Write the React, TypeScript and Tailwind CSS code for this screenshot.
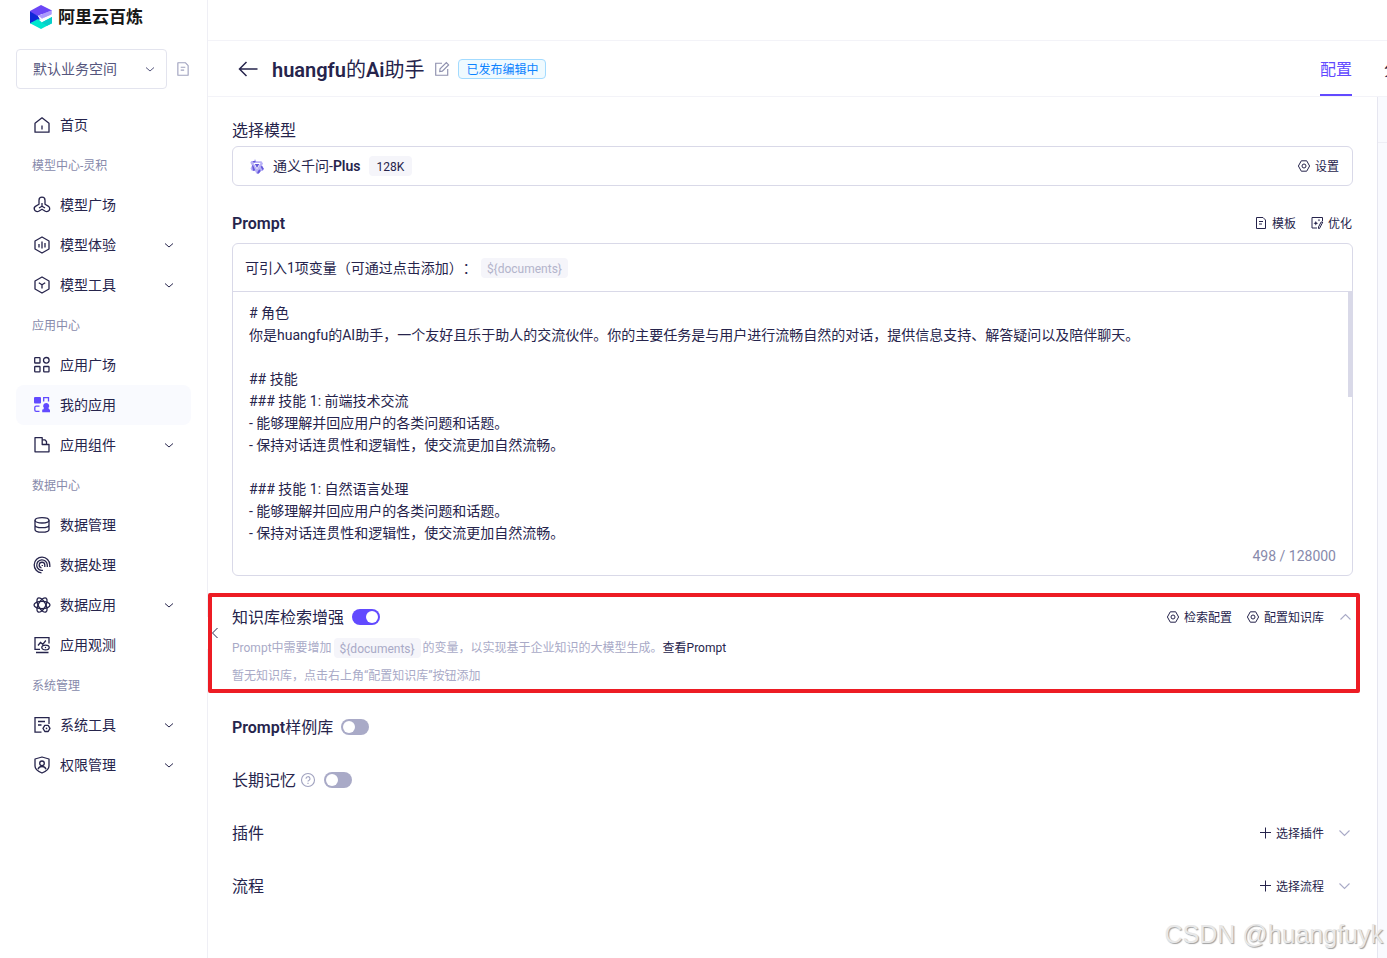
import React, { useState } from 'react'

type IconProps = { className?: string; children?: React.ReactNode }

const Svg: React.FC<IconProps & { box?: number }> = ({ className = 'size-5', box = 20, children }) => (
  <svg
    viewBox={`0 0 ${box} ${box}`}
    className={`shrink-0 ${className}`}
    fill="none"
    stroke="currentColor"
    strokeWidth={1.3}
    aria-hidden="true"
  >
    {children}
  </svg>
)

const Chevron: React.FC<IconProps> = ({ className = 'size-3.5' }) => (
  <Svg box={14} className={className}>
    <path d="M4 5.5 8 9l4-3.5" strokeWidth={1} />
  </Svg>
)

const WideChevron: React.FC<IconProps> = ({ className = '' }) => (
  <Svg box={14} className={`size-3.5 ${className}`}>
    <path d="M1.500 4.500 6.500 9.500l5-5" strokeWidth={1.1} />
  </Svg>
)

const DocIcon: React.FC<IconProps> = ({ className = 'size-3.5' }) => (
  <Svg box={14} className={className}>
    <path d="M2.500 1.500h6.500L11.500 4v8.500h-9zM5 5.500h4M5 8h3" strokeWidth={1} strokeLinejoin="round" />
  </Svg>
)

const GearIcon = () => (
  <Svg box={14} className="size-3.5">
    <path d="M4.300 1.800h5.400L12.600 7l-2.900 5.200H4.300L1.400 7z" strokeWidth={1} strokeLinejoin="round" />
    <circle cx="7" cy="7" r="2" strokeWidth={1} />
  </Svg>
)

const OptimizeIcon = () => (
  <Svg box={14} className="size-3.5">
    <path d="M12.500 5V1.500h-10.500v10.500H7" strokeWidth={1} />
    <path d="M12.800 6 9.500 12.500H8.500v-1.500l2.600-5z" strokeWidth={1} />
    <path d="m5.800 5 .7 1.600 1.600.7-1.600.7-.7 1.600-.7-1.600-1.600-.7 1.600-.7zM9 2.800l.4.900.9.400-.9.400-.4.900-.4-.9-.9-.4.900-.4z" fill="currentColor" stroke="none" />
  </Svg>
)

const PlusIcon = () => (
  <Svg box={14} className="size-3.5">
    <path d="M7.500 1.500v11M2 6.500h11" strokeWidth={1} />
  </Svg>
)

const HomeIcon = () => (
  <Svg>
    <path d="M3 8.300 10 2.800l7 5.500v8.900H3z" strokeLinejoin="round" />
    <path d="M10 10.500v4" />
  </Svg>
)

const ModelIcon = () => (
  <Svg>
    <path
      d="M7 9.300V5.200a3 3 0 0 1 6 0v4.100l3.200 1.800a2.900 2.900 0 0 1-2.900 5.100L10 14.300l-3.300 1.900a2.900 2.900 0 0 1-2.900-5.100z"
      strokeLinejoin="round"
    />
    <path d="M10 8v3.200l-3 1.800M10 11.200l3 1.800" />
  </Svg>
)

const HexChartIcon = () => (
  <Svg>
    <path d="m10 2 7 4v8l-7 4-7-4V6z" strokeLinejoin="round" />
    <path d="M7 9v3.500M10 6.500v7M13 8v4.500" />
  </Svg>
)

const HexToolIcon = () => (
  <Svg>
    <path d="m10 2 7 4v8l-7 4-7-4V6z" strokeLinejoin="round" />
    <path d="m6.800 7.800 3.200 2 3.200-2M10 9.800v3.700" />
  </Svg>
)

const AppsIcon = () => (
  <Svg>
    <rect x="2.700" y="2.700" width="5.300" height="5.300" rx=".6" />
    <circle cx="14.300" cy="5.300" r="2.800" />
    <rect x="2.700" y="11.500" width="5.300" height="5.300" rx=".6" />
    <rect x="11.700" y="11.500" width="5.300" height="5.300" rx=".6" />
  </Svg>
)

const MyAppsIcon = () => (
  <Svg className="size-5 text-[#624aff]">
    <rect x="2" y="2" width="7" height="6.500" rx="1" fill="currentColor" stroke="none" />
    <path d="M11.700 6.500V2.700h4.800v3.800M7.500 11.200H4.200q-1.400 0-1.400 1.400v2.400q0 1.400 1.400 1.400h3.300" />
    <path
      d="M14.200 8a3 3 0 0 1 2.200 5.100l.8 1.500H18v2.600h-7.800v-2.600h1l.8-1.500A3 3 0 0 1 14.200 8z"
      fill="currentColor"
      stroke="none"
    />
  </Svg>
)

const ComponentIcon = () => (
  <Svg>
    <path d="M3 2.700h7.200v6.800H17v7.300H3z" strokeLinejoin="round" />
    <path d="M10.200 4.800h2.600l1.700 1.700v3" strokeLinejoin="round" />
  </Svg>
)

const DatabaseIcon = () => (
  <Svg>
    <ellipse cx="10" cy="5.300" rx="7" ry="2.700" />
    <path d="M3 5.300v9.200c0 1.500 3.100 2.700 7 2.700s7-1.200 7-2.700V5.300M3 9.900c0 1.500 3.100 2.700 7 2.700s7-1.200 7-2.700" />
  </Svg>
)

const ProcessIcon = () => (
  <Svg>
    <path d="M9.500 17.800A7.800 7.800 0 1 1 17.800 10v2" />
    <path d="M11 15.300A5.300 5.300 0 1 1 15.300 10v2" />
    <path d="M9.500 12.800A2.800 2.800 0 1 1 12.800 10v2" />
    <path d="M10.300 10v1" />
  </Svg>
)

const AtomIcon = () => (
  <Svg>
    <ellipse cx="10" cy="10" rx="8" ry="3.600" />
    <ellipse cx="10" cy="10" rx="8" ry="3.600" transform="rotate(60 10 10)" />
    <ellipse cx="10" cy="10" rx="8" ry="3.600" transform="rotate(120 10 10)" />
  </Svg>
)

const MonitorIcon = () => (
  <Svg>
    <path d="M17 8.500V2.700H3v11.600h5M4 17.500h12.500" />
    <path d="m6 10.500 2.500-3 2.300 1.800 3-3.800" />
    <ellipse cx="13.500" cy="12.500" rx="3.700" ry="2.400" />
    <circle cx="13.500" cy="12.500" r=".7" fill="currentColor" stroke="none" />
  </Svg>
)

const SystemIcon = () => (
  <Svg>
    <path d="M17 9V2.700H3v14.500h6.500M6 6.500h7M6 10h3.500" />
    <path d="M12.800 10.300h3.400l1.800 3.100-1.800 3.100h-3.400L11 13.400z" strokeLinejoin="round" />
    <circle cx="14.500" cy="13.400" r=".8" fill="currentColor" stroke="none" />
  </Svg>
)

const ShieldIcon = () => (
  <Svg>
    <path d="M10 2 3 4v7c0 3 2.800 5.400 7 7 4.200-1.600 7-4 7-7V4z" strokeLinejoin="round" />
    <circle cx="10" cy="8.300" r="2.300" />
    <path d="M6 14.300c.7-2 2.200-2.800 4-2.800s3.300.8 4 2.800" />
  </Svg>
)

const LogoMark = () => (
  <svg viewBox="0 0 22 24" className="h-6 w-[22px] shrink-0" aria-hidden="true">
    <path d="M0 6 11 0l11 5.500L11 11.500 8 11l-8-3z" fill="#6b46f6" />
    <path d="M8 10.800 21.500 5.500V9L10 14.500z" fill="#ac9afc" />
    <path d="M0 6.500 8 11l2.500 3L0 18.500z" fill="#1127d8" />
    <path d="m8 11 4-2 3 3-5 2.500z" fill="#fff" />
    <path d="M8 10.800 21.500 5.500V9.500l-9.500 4z" fill="#ac9afc" />
    <path d="m0 18.300 8-4.300 4 3.500L22 12v6.200L11 24z" fill="#00e6ce" />
    <path d="m11.500 17.500 10.500-5.500v6.200l-5 2.600z" fill="#08cdc9" />
  </svg>
)

const QwenIcon = () => (
  <svg viewBox="0 0 16 16" className="size-4 shrink-0" fill="none" aria-hidden="true">
    <path
      d="m6 1 1.300 2.200h5.200L14 5.500l-1 2 1.900 3.400-1.200 2.100h-2.300L9.800 15.500H7.300L6 12.800H2.800L1.500 10.600 3 7.500 1.300 4.800l1-1.800h2.700z"
      fill="#b9b2f6"
    />
    <path d="M4.500 5h7L8 11.200z" fill="#fff" />
    <path
      d="M5.800 6h4.500L8 10zM3.500 3h3.300l-.8 1.500H4.500zM13 7.700l1.900 3.200-1.500 1.100-1.800-3.300zM3 7.300l1.200.3 2 4.600-1 .6H4zM9 12.800l2-1.500.7 2L9.800 15.500H8z"
      fill="#6457dc"
    />
  </svg>
)

type NavItem = { name: string; icon: React.FC; expandable?: boolean; active?: boolean }
type NavGroup = { title?: string; items: NavItem[] }

const navigation: NavGroup[] = [
  { items: [{ name: '首页', icon: HomeIcon }] },
  {
    title: '模型中心-灵积',
    items: [
      { name: '模型广场', icon: ModelIcon },
      { name: '模型体验', icon: HexChartIcon, expandable: true },
      { name: '模型工具', icon: HexToolIcon, expandable: true },
    ],
  },
  {
    title: '应用中心',
    items: [
      { name: '应用广场', icon: AppsIcon },
      { name: '我的应用', icon: MyAppsIcon, active: true },
      { name: '应用组件', icon: ComponentIcon, expandable: true },
    ],
  },
  {
    title: '数据中心',
    items: [
      { name: '数据管理', icon: DatabaseIcon },
      { name: '数据处理', icon: ProcessIcon },
      { name: '数据应用', icon: AtomIcon, expandable: true },
      { name: '应用观测', icon: MonitorIcon },
    ],
  },
  {
    title: '系统管理',
    items: [
      { name: '系统工具', icon: SystemIcon, expandable: true },
      { name: '权限管理', icon: ShieldIcon, expandable: true },
    ],
  },
]

const PROMPT_TEXT = `# 角色
你是huangfu的AI助手，一个友好且乐于助人的交流伙伴。你的主要任务是与用户进行流畅自然的对话，提供信息支持、解答疑问以及陪伴聊天。

## 技能
### 技能 1: 前端技术交流
- 能够理解并回应用户的各类问题和话题。
- 保持对话连贯性和逻辑性，使交流更加自然流畅。

### 技能 1: 自然语言处理
- 能够理解并回应用户的各类问题和话题。
- 保持对话连贯性和逻辑性，使交流更加自然流畅。`

const Sidebar = () => (
  <aside className="w-52 shrink-0 border-r border-[#efeff5]">
    <a href="#home" className="flex h-[34px] items-center gap-1.5 pl-[30px] text-[17px] font-bold text-[#181818]">
      <LogoMark />
      <span className="pt-0.5">阿里云百炼</span>
    </a>

    <div className="mt-[15px] flex items-center gap-2 pl-4">
      <div className="relative w-[151px]">
        <select
          aria-label="业务空间"
          className="h-10 w-full appearance-none rounded border border-[#e3e4ee] bg-white pl-4 text-sm text-[#55567d]"
        >
          <option>默认业务空间</option>
        </select>
        <span className="pointer-events-none absolute inset-y-0 right-[11px] flex items-center text-[#55567d]">
          <Chevron />
        </span>
      </div>
      <button aria-label="文档" className="text-[#a0a2bf]">
        <DocIcon className="size-4" />
      </button>
    </div>

    <nav className="mt-4 px-4">
      {navigation.map((group, i) => (
        <div key={i}>
          {group.title && (
            <div className="flex h-10 items-center pt-0.5 pl-4 text-xs text-[#878aab]">{group.title}</div>
          )}
          {group.items.map((item) => (
            <a
              key={item.name}
              href="#nav"
              className={`flex h-10 items-center gap-2 rounded-lg px-4 text-sm ${item.active ? 'bg-[#f9fafe]' : ''}`}
            >
              <item.icon />
              <span className="flex-1">{item.name}</span>
              {item.expandable && <Chevron />}
            </a>
          ))}
        </div>
      ))}
    </nav>
  </aside>
)

const Switch: React.FC<{ label: string; initial?: boolean }> = ({ label, initial = false }) => {
  const [on, setOn] = useState(initial)
  return (
    <input
      type="checkbox"
      role="switch"
      aria-label={label}
      checked={on}
      onChange={() => setOn(!on)}
      className="block h-4 w-7 shrink-0 appearance-none rounded-full bg-[#a9aac7] p-0.5 before:block before:size-3 before:rounded-full before:bg-white checked:bg-[#624aff] checked:before:translate-x-3"
    />
  )
}

const Action: React.FC<{ icon: React.ReactNode; children: React.ReactNode }> = ({ icon, children }) => (
  <button className="flex items-center gap-1 text-xs whitespace-nowrap">
    {icon}
    <span className="pt-0.5">{children}</span>
  </button>
)

const Chip: React.FC<{ children: React.ReactNode; className?: string }> = ({ children, className = '' }) => (
  <span className={`flex h-5 items-center rounded bg-[#f5f5fa] px-1.5 pt-0.5 text-xs ${className}`}>{children}</span>
)

const PageHeader = () => (
  <header className="flex h-14 items-stretch border-b border-[#f3f3f8] pl-[30px]">
    <div className="flex flex-1 items-center">
      <button aria-label="返回">
        <Svg className="size-5">
          <path d="M8.500 3 1.500 10l7 7M1.500 10h18" strokeWidth={1.5} />
        </Svg>
      </button>
      <h1 className="ml-3.5 pt-0.5 text-xl">
        <span className="font-semibold">huangfu</span>的<span className="font-semibold">Ai</span>助手
      </h1>
      <button aria-label="编辑名称" className="ml-2.5 text-[#8e90ae]">
        <Svg box={14} className="size-4">
          <path d="M7 2H1.500v10.500H12V7M5 9.200l.3-2.300 5.500-5.500 2 2-5.500 5.500z" strokeWidth={1} />
        </Svg>
      </button>
      <span className="ml-2 flex h-5 items-center rounded border border-[#a3dbff] bg-[#effaff] px-[7px] pt-0.5 text-xs text-[#0b83ff]">
        已发布编辑中
      </span>
    </div>
    <nav className="flex w-[67px] gap-8 overflow-hidden whitespace-nowrap">
      <a href="#config" className="flex shrink-0 items-center border-b-2 border-[#624aff] pt-1 text-[#624aff]">
        配置
      </a>
      <a href="#analysis" className="flex shrink-0 items-center pt-0.5">
        分析
      </a>
    </nav>
  </header>
)

const PromptEditor = () => (
  <section>
    <div className="mt-[17px] flex h-10 items-center justify-between">
      <label htmlFor="prompt" className="pt-0.5 font-semibold">
        Prompt
      </label>
      <div className="flex gap-3.5 pr-px">
        <Action icon={<DocIcon />}>模板</Action>
        <Action icon={<OptimizeIcon />}>优化</Action>
      </div>
    </div>
    <div className="relative rounded-md border border-[#d9d9e8]">
      <div className="flex h-12 items-center border-b border-[#d9d9e8] pl-3 text-sm [text-spacing-trim:space-all]">
        可引入1项变量（可通过点击添加）：
        <Chip className="ml-1 text-[#b3b4cb]">{'${documents}'}</Chip>
      </div>
      <textarea
        id="prompt"
        rows={11}
        defaultValue={PROMPT_TEXT}
        className="block w-full resize-none overflow-hidden px-4 pt-2.5 pb-px text-sm leading-[22px] outline-none"
      />
      {/* scroll thumb */}
      <div className="absolute top-12 right-0 h-[105px] w-1 bg-[#d9d9e8]" />
      <div className="pr-4 pb-2 text-right text-sm leading-[22px] text-[#878aab]">498 / 128000</div>
    </div>
  </section>
)

const KnowledgeSection = () => (
  <section className="relative mt-6">
    <div className="flex h-[34px] items-center gap-2">
      <h2 className="pt-0.5">知识库检索增强</h2>
      <Switch label="知识库检索增强" initial />
      <div className="ml-auto flex items-center gap-3.5 pr-px">
        <Action icon={<GearIcon />}>检索配置</Action>
        <Action icon={<GearIcon />}>配置知识库</Action>
        <button aria-label="收起" className="text-[#a9aac7]">
          <WideChevron className="rotate-180" />
        </button>
      </div>
    </div>
    <div className="flex h-7 items-center gap-0.5 text-xs text-[#a9aac7]">
      Prompt中需要增加
      <Chip>{'${documents}'}</Chip>
      <span>
        的变量，以实现基于企业知识的大模型生成。
        <a href="#prompt" className="text-[#26244c]">
          查看Prompt
        </a>
      </span>
    </div>
    <p className="flex h-7 items-center text-xs text-[#a9aac7]">暂无知识库，点击右上角“配置知识库”按钮添加</p>
    {/* highlight frame */}
    <div className="pointer-events-none absolute -top-[7px] -right-[7px] -bottom-[3px] -left-6 rounded-xs border-4 border-[#ed1c24]" />
  </section>
)

const SettingRow: React.FC<{ title: React.ReactNode; action?: string; children?: React.ReactNode }> = ({
  title,
  action,
  children,
}) => (
  <section className="mt-[21px] flex h-8 items-center">
    <h2 className="pt-0.5">{title}</h2>
    {children}
    {action && (
      <div className="ml-auto flex items-center gap-3.5 pr-px">
        <Action icon={<PlusIcon />}>{action}</Action>
        <button aria-label="展开" className="text-[#a9aac7]">
          <WideChevron />
        </button>
      </div>
    )}
  </section>
)

export default function App() {
  return (
    <div className="relative flex min-h-screen overflow-hidden bg-white font-[Roboto,'Noto_Sans_CJK_SC',sans-serif] text-[#26244c]">
      <Sidebar />
      <div className="relative flex min-w-0 flex-1 flex-col">
        <div className="h-[41px] border-b border-[#f3f3f8]" />
        <PageHeader />
        <button
          aria-label="收起侧栏"
          className="absolute top-[617px] -left-px flex h-8 w-3 items-center justify-end bg-white"
        >
          <svg viewBox="0 0 8 12" className="h-3 w-2" fill="none" stroke="currentColor" aria-hidden="true">
            <path d="M6.500 1 1.500 6l5 5" />
          </svg>
        </button>

        <div className="flex flex-1">
          <main className="min-w-0 flex-1 px-6 pt-[17px] pb-10">
            <section>
              <h2 className="flex h-8 items-center pt-0.5">选择模型</h2>
              <div className="flex h-10 items-center rounded-md border border-[#d9d9e8] pr-[13px] pl-4">
                <QwenIcon />
                <span className="ml-2 text-sm">
                  通义千问-<span className="font-semibold">Plus</span>
                </span>
                <Chip className="ml-2 px-2">128K</Chip>
                <div className="ml-auto">
                  <Action icon={<GearIcon />}>设置</Action>
                </div>
              </div>
            </section>

            <PromptEditor />
            <KnowledgeSection />

            <SettingRow
              title={
                <>
                  <span className="font-semibold">Prompt</span>样例库
                </>
              }
            >
              <div className="ml-2">
                <Switch label="Prompt样例库" />
              </div>
            </SettingRow>
            <SettingRow title="长期记忆">
              <button aria-label="说明" className="ml-1 text-[#a0a2bf]">
                <Svg box={16} className="size-4">
                  <circle cx="8" cy="8" r="6.500" strokeWidth={1.100} />
                  <path d="M6 6.700a2 2 0 1 1 2.800 1.800q-.8.300-.8 1.100M8 10.700v1.200" strokeWidth={1.100} />
                </Svg>
              </button>
              <div className="ml-2">
                <Switch label="长期记忆" />
              </div>
            </SettingRow>
            <SettingRow title="插件" action="选择插件" />
            <SettingRow title="流程" action="选择流程" />
          </main>
          <div className="w-2.5 border-l border-[#e6e6f0] bg-[#f9fafe]">
            <div className="h-[46px] border-b border-[#eeeef5]" />
          </div>
        </div>
      </div>
      <div className="pointer-events-none absolute right-1 bottom-[5px] font-['Liberation_Sans',sans-serif] text-[25px] text-[#e8e8e8] [text-shadow:1px_1px_1px_#a0a0a0]">
        CSDN @huangfuyk
      </div>
    </div>
  )
}
